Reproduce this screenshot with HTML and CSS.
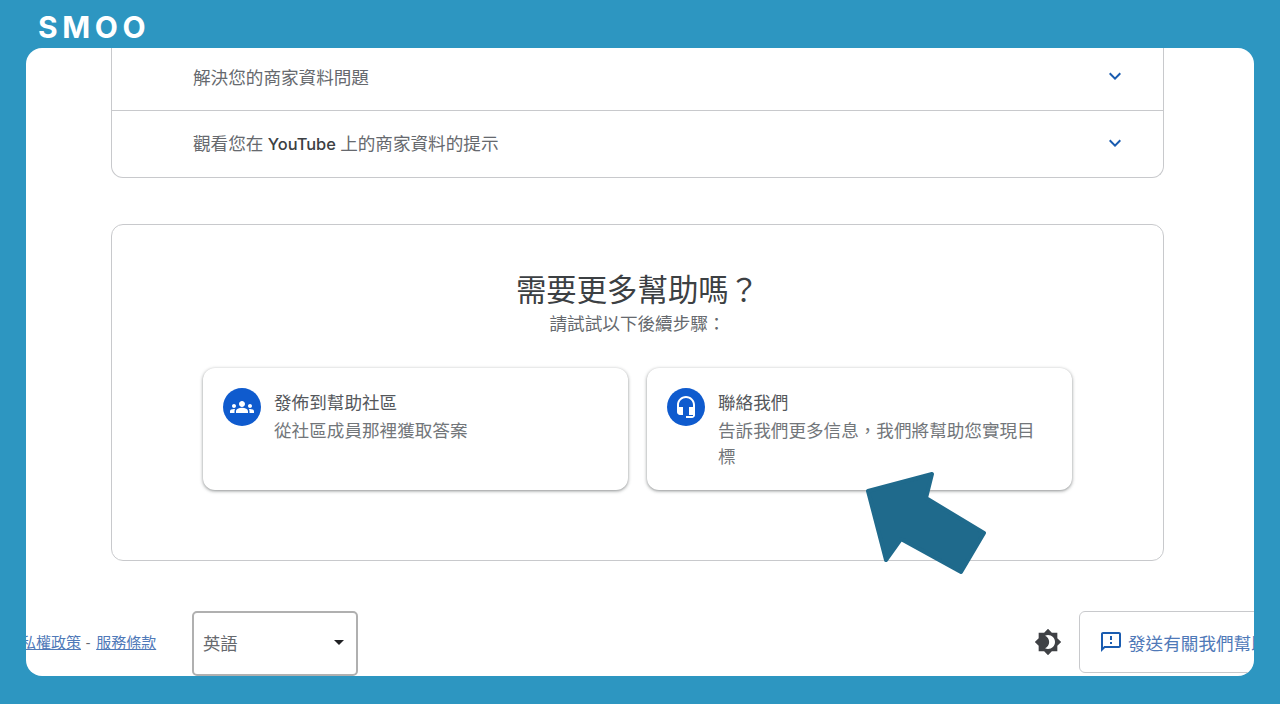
FILE: index.html
```html
<!DOCTYPE html>
<html lang="zh-Hant">
<head>
    <meta charset="UTF-8">
    <meta name="viewport" content="width=device-width, initial-scale=1.0">
    <title>聯絡我們</title>
    <link rel="stylesheet" href="styles.css">
</head>
<body>

    <header class="topbar">
        <div class="logo">SMOO</div>
    </header>

    <main class="panel">
        <div class="accordion">
            <div class="accordion-row">
                <span>解決您的商家資料問題</span>
                <svg class="chevron" viewBox="0 0 24 24"><path d="M16.59 8.59L12 13.17 7.41 8.59 6 10l6 6 6-6z"/></svg>
            </div>
            <div class="accordion-row">
                <span>觀看您在 <span class="brand">YouTube</span> 上的商家資料的提示</span>
                <svg class="chevron" viewBox="0 0 24 24"><path d="M16.59 8.59L12 13.17 7.41 8.59 6 10l6 6 6-6z"/></svg>
            </div>
        </div>

        <section class="help">
            <h2>需要更多幫助嗎？</h2>
            <p class="help-sub">請試試以下後續步驟：</p>
            <div class="help-cards">
                <div class="help-card">
                    <div class="help-icon">
                        <svg viewBox="0 0 24 24"><path d="M12 12.75c1.63 0 3.07.39 4.24.9 1.08.48 1.76 1.56 1.76 2.73V18H6v-1.61c0-1.18.68-2.26 1.76-2.73 1.17-.52 2.61-.91 4.24-.91zM4 13c1.1 0 2-.9 2-2s-.9-2-2-2-2 .9-2 2 .9 2 2 2zm1.13 1.1c-.37-.06-.74-.1-1.13-.1-.99 0-1.93.21-2.78.58C.48 14.9 0 15.62 0 16.43V18h4.5v-1.61c0-.83.23-1.61.63-2.29zM20 13c1.1 0 2-.9 2-2s-.9-2-2-2-2 .9-2 2 .9 2 2 2zm4 3.43c0-.81-.48-1.53-1.22-1.85-.85-.37-1.79-.58-2.78-.58-.39 0-.76.04-1.13.1.4.68.63 1.46.63 2.29V18H24v-1.57zM12 6c1.66 0 3 1.34 3 3s-1.34 3-3 3-3-1.34-3-3 1.34-3 3-3z"/></svg>
                    </div>
                    <div class="help-text">
                        <div class="help-title">發佈到幫助社區</div>
                        <div class="help-desc">從社區成員那裡獲取答案</div>
                    </div>
                </div>
                <div class="help-card">
                    <div class="help-icon">
                        <svg viewBox="0 0 24 24"><path d="M12 1c-4.97 0-9 4.03-9 9v7c0 1.66 1.34 3 3 3h3v-8H5v-2c0-3.87 3.13-7 7-7s7 3.13 7 7v2h-4v8h4v1h-7v2h6c1.66 0 3-1.34 3-3V10c0-4.97-4.03-9-9-9z"/></svg>
                    </div>
                    <div class="help-text">
                        <div class="help-title">聯絡我們</div>
                        <div class="help-desc">告訴我們更多信息，我們將幫助您實現目標</div>
                    </div>
                </div>
            </div>
        </section>

        <footer class="footer">
            <div class="footer-links">
                <a href="#">私權政策</a><span class="dash">-</span><a href="#">服務條款</a>
            </div>
            <div class="lang-select">英語</div>
            <svg class="theme-icon" viewBox="0 0 24 24"><path d="M20 8.69V4h-4.69L12 .69 8.69 4H4v4.69L.69 12 4 15.31V20h4.69L12 23.31 15.31 20H20v-4.69L23.31 12 20 8.69zM12 18c-.89 0-1.74-.2-2.5-.55C11.56 16.5 13 14.42 13 12s-1.44-4.5-3.5-5.45C10.26 6.2 11.11 6 12 6c3.31 0 6 2.69 6 6s-2.69 6-6 6z"/></svg>
            <div class="feedback">
                <svg viewBox="0 0 24 24"><path d="M20 2H4c-1.1 0-1.99.9-1.99 2L2 22l4-4h14c1.1 0 2-.9 2-2V4c0-1.1-.9-2-2-2zm0 14H5.17L4 17.17V4h16v12zm-9-4h2v2h-2zm0-6h2v4h-2z"/></svg>
                <span>發送有關我們幫助</span>
            </div>
        </footer>
    </main>

    <svg class="arrow" viewBox="0 0 130 110">
        <path d="M3 20 L67 3 L61 27 L119 62 L96 101 L36 68 L21 89 Z" fill="#1f6a8c" stroke="#1f6a8c" stroke-width="4" stroke-linejoin="round"/>
    </svg>

</body>
</html>
```

FILE: styles.css
```css
body {
    font-family: Roboto, "Noto Sans CJK TC", sans-serif;
    background-color: #2d96c1;
    color: #66696e;
    margin: 0;
    height: 704px;
    overflow: hidden;
}

.topbar {
    height: 48px;
    padding-left: 38px;
    box-sizing: border-box;
}

.logo {
    font-family: Inter, sans-serif;
    font-weight: 700;
    font-size: 30px;
    line-height: 54px;
    letter-spacing: 4.6px;
    color: #fff;
}

.panel {
    margin: 0 26px;
    height: 628px;
    background-color: #fff;
    border-radius: 16px;
    overflow: hidden;
}

.accordion {
    margin-left: 85px;
    width: 1053px;
    box-sizing: border-box;
    border: 1px solid #c8c9cc;
    border-top: none;
    border-radius: 0 0 12px 12px;
}

.accordion-row {
    display: flex;
    align-items: center;
    justify-content: space-between;
    height: 63px;
    padding: 0 36px 3px 81px;
    font-size: 17.6px;
}

.accordion-row:first-child {
    height: 56px;
    padding-bottom: 6px;
    border-bottom: 1px solid #c8c9cc;
}

.brand {
    font-family: Inter, sans-serif;
    font-size: 16.4px;
    font-weight: 500;
    color: #3c4043;
}

.chevron {
    width: 24px;
    height: 24px;
    fill: #1a5cb0;
}

.help {
    margin: 46px 0 0 85px;
    width: 1053px;
    height: 337px;
    box-sizing: border-box;
    border: 1px solid #c8c9cc;
    border-radius: 12px;
    padding-top: 46px;
    text-align: center;
}

.help h2 {
    margin: 0;
    font-size: 30.4px;
    font-weight: 400;
    line-height: 40px;
    color: #3c4043;
}

.help-sub {
    margin: 1px 0 0;
    font-size: 17.6px;
    line-height: 24px;
}

.help-cards {
    display: flex;
    gap: 19px;
    margin: 32px 0 0 91px;
    text-align: left;
}

.help-card {
    display: flex;
    gap: 13px;
    width: 425px;
    height: 122px;
    box-sizing: border-box;
    padding: 20px;
    border-radius: 12px;
    background-color: #fff;
    box-shadow: 0 1px 3px rgba(60, 64, 67, 0.45), 0 1px 4px rgba(60, 64, 67, 0.2);
}

.help-icon {
    flex: none;
    display: flex;
    align-items: center;
    justify-content: center;
    width: 38px;
    height: 38px;
    border-radius: 50%;
    background-color: #0f5bce;
}

.help-icon svg {
    width: 24px;
    height: 24px;
    fill: #fff;
}

.help-text {
    padding-top: 1px;
}

.help-title {
    font-size: 17.6px;
    line-height: 29px;
    color: #55585c;
}

.help-desc {
    font-size: 17.6px;
    line-height: 26px;
    color: #72767a;
}

.footer {
    display: flex;
    align-items: center;
    margin: 50px 0 0 -5px;
    height: 65px;
    white-space: nowrap;
}

.footer-links {
    flex: none;
    width: 171px;
    padding-bottom: 4px;
    box-sizing: border-box;
    font-size: 15px;
}

.footer-links a {
    color: #4f79b8;
}

.dash {
    margin: 0 6px 0 5px;
}

.lang-select {
    flex: none;
    position: relative;
    width: 166px;
    height: 65px;
    box-sizing: border-box;
    border: 2px solid #b0b0b0;
    border-radius: 5px;
    padding-left: 9px;
    font-size: 17.3px;
    line-height: 63px;
}

.lang-select::after {
    content: "";
    position: absolute;
    top: 27px;
    right: 12px;
    border-left: 5px solid transparent;
    border-right: 5px solid transparent;
    border-top: 5px solid #202124;
}

.theme-icon {
    flex: none;
    width: 28px;
    height: 28px;
    margin: 0 0 3px 676px;
    fill: #3f4145;
}

.feedback {
    flex: none;
    align-self: flex-start;
    display: flex;
    align-items: center;
    gap: 5px;
    margin-left: 17px;
    height: 62px;
    box-sizing: border-box;
    padding: 0 20px 0 19px;
    border: 1px solid #c8c9cc;
    border-radius: 6px;
    font-size: 17.6px;
    color: #4f79b8;
}

.feedback svg {
    width: 24px;
    height: 24px;
    fill: #1a5cb0;
}

.arrow {
    position: absolute;
    left: 865px;
    top: 471px;
    width: 130px;
    height: 110px;
}
```
